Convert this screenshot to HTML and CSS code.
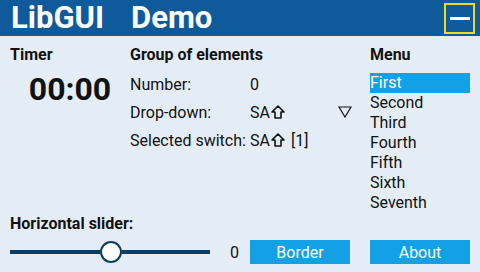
FILE: index.html
```html
<!doctype html>
<html lang="en">

<head>
  <meta charset="utf-8">
  <title>LibGUI Demo</title>
  <link rel="stylesheet" href="styles.css">
</head>

<body>
  <!-- TITLE BAR -->
  <div class="titlebar">
    <h1 class="title"><span>LibGUI</span><span>Demo</span></h1>
    <button type="button" class="minimize"><span class="dash"></span></button>
  </div>

  <div class="panels">
    <div class="timer">
      <h2>Timer</h2>
      <div class="clock">00:00</div>
    </div>

    <div class="group">
      <h2>Group of elements</h2>
      <div class="row"><span class="label">Number:</span><span>0</span></div>
      <div class="row">
        <span class="label">Drop-down:</span>
        <span>SA<svg class="sw" width="14" height="14" viewBox="0 0 14 14">
            <polygon points="7,1 13,7 10,7 10,13 4,13 4,7 1,7" fill="none" stroke="#111" stroke-width="1.6" stroke-linejoin="round" />
          </svg></span>
        <svg class="dropdown" width="14" height="12" viewBox="0 0 14 12">
          <polygon points="1,1 13,1 7,11" fill="none" stroke="#111" stroke-width="1.2" />
        </svg>
      </div>
      <div class="row">
        <span class="label">Selected switch:</span>
        <span>SA<svg class="sw" width="14" height="14" viewBox="0 0 14 14">
            <polygon points="7,1 13,7 10,7 10,13 4,13 4,7 1,7" fill="none" stroke="#111" stroke-width="1.6" stroke-linejoin="round" />
          </svg> [1]</span>
      </div>
    </div>

    <div class="menu">
      <h2>Menu</h2>
      <ul class="items">
        <li class="selected">First</li>
        <li>Second</li>
        <li>Third</li>
        <li>Fourth</li>
        <li>Fifth</li>
        <li>Sixth</li>
        <li>Seventh</li>
      </ul>
    </div>
  </div>

  <div class="footer">
    <h2>Horizontal slider:</h2>
    <div class="controls">
      <div class="slider">
        <div class="track" style="width: 90px"></div>
        <div class="knob"></div>
        <div class="track grow"></div>
      </div>
      <span class="value">0</span>
      <button type="button" class="btn">Border</button>
      <button type="button" class="btn about">About</button>
    </div>
  </div>
</body>

</html>
```

FILE: styles.css
```css
html,
body {
  margin: 0;
  padding: 0;
  width: 480px;
  height: 272px;
  overflow: hidden;
}

body {
  display: flex;
  flex-direction: column;
  background: #e4edf6;
  color: #111;
  font-family: Roboto, "Liberation Sans", sans-serif;
  font-size: 16px;
}

h2 {
  margin: 0;
  font-size: 16px;
  font-weight: bold;
  line-height: 20px;
}

.titlebar {
  height: 36px;
  background: #0e5a9b;
  display: flex;
  align-items: center;
  justify-content: space-between;
  padding: 0 5px 0 11px;
}

.title {
  margin: 0;
  color: #fff;
  font-size: 31px;
  font-weight: bold;
  line-height: 36px;
  display: flex;
  gap: 27px;
}

.minimize {
  width: 31px;
  height: 31px;
  border: 2px solid #f0d828;
  background: transparent;
  padding: 0;
  display: flex;
  align-items: center;
  justify-content: center;
}

.dash {
  width: 20px;
  height: 3px;
  background: #fff;
}

.panels {
  display: grid;
  grid-template-columns: 120px 240px 100px;
  padding: 9px 10px 0;
}

.clock {
  font-size: 32px;
  font-weight: bold;
  text-align: center;
  line-height: 40px;
  margin-top: 4px;
}

.group h2 {
  margin-bottom: 5px;
}

.row {
  height: 28px;
  display: flex;
  align-items: center;
}

.label {
  min-width: 120px;
}

.sw {
  vertical-align: -1px;
  margin: 0 2px 0 1px;
}

.dropdown {
  margin-left: auto;
  margin-right: 18px;
}

.items {
  list-style: none;
  margin: 8px 0 0;
  padding: 0;
}

.items li {
  height: 20px;
  line-height: 20px;
}

.items .selected {
  background: #14a0e4;
  color: #fff;
}

.footer {
  margin-top: auto;
  padding: 0 10px 8px;
}

.controls {
  display: flex;
  align-items: center;
  height: 24px;
  margin-top: 6px;
}

.slider {
  width: 200px;
  display: flex;
  align-items: center;
}

.track {
  height: 4px;
  background: #0c3c64;
}

.grow {
  flex: 1;
}

.knob {
  width: 18px;
  height: 18px;
  border: 2px solid #0c3c64;
  border-radius: 50%;
  background: #fff;
}

.value {
  width: 29px;
  text-align: right;
  margin-right: 11px;
}

.btn {
  width: 100px;
  height: 24px;
  border: none;
  padding: 0;
  background: #14a0e4;
  color: #fff;
  font: 16px Roboto, "Liberation Sans", sans-serif;
}

.about {
  margin-left: 20px;
}
```
